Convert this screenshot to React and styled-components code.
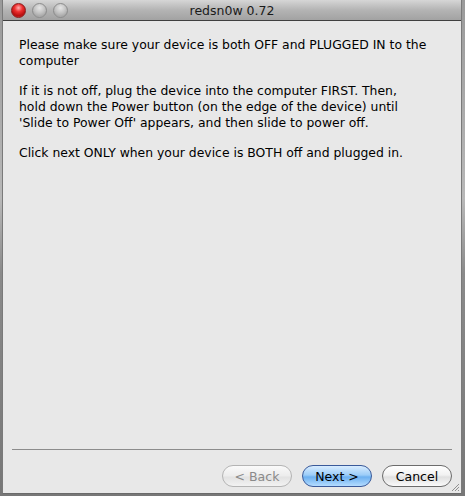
import React from 'react';
import styled, { createGlobalStyle } from 'styled-components';

const Global = createGlobalStyle`
  html, body { margin: 0; padding: 0; }
  body {
    width: 465px;
    height: 496px;
    overflow: hidden;
    background: linear-gradient(#9a9a9a, #b8b8b8 40%, #8a8a8a 55%, #777);
    font-family: "DejaVu Sans", "Liberation Sans", sans-serif;
  }
`;

const Window = styled.div`
  width: 460px;
  height: 494px;
  margin-left: 2px;
  border-left: 1px solid #7a7a7a;
  border-right: 1px solid #7a7a7a;
  border-bottom: 1px solid #6a6a6a;
  box-sizing: border-box;
  display: flex;
  flex-direction: column;
  background: #e8e8e8;
  position: relative;
`;

const TitleBar = styled.div`
  height: 21px;
  flex: none;
  box-sizing: border-box;
  border-bottom: 1px solid #404040;
  background: linear-gradient(#d6d6d6, #b4b4b4 50%, #a2a2a2);
  display: flex;
  align-items: center;
  position: relative;
  padding-left: 8px;
  gap: 5px;
`;

const Light = styled.div`
  width: 15px;
  height: 15px;
  border-radius: 50%;
  box-sizing: border-box;
  border: 1px solid ${p => (p.$red ? '#8a1a1a' : '#8c8c8c')};
  background: ${p =>
    p.$red
      ? 'radial-gradient(circle at 50% 30%, #ffb0b0 0%, #ee3030 35%, #b80f0f 70%, #e54848 100%)'
      : 'radial-gradient(circle at 50% 30%, #e6e6e6 0%, #c4c4c4 45%, #a8a8a8 75%, #c9c9c9 100%)'};
  margin-right: 1px;
`;

const Title = styled.div`
  position: absolute;
  left: 0;
  right: 0;
  text-align: center;
  font-size: 12.5px;
  color: #1a1a1a;
  pointer-events: none;
`;

const Content = styled.div`
  flex: 1;
  padding: 16px 14px 0 16px;
  font-size: 12.4px;
  line-height: 16px;
  color: #000;
`;

const Para = styled.p`
  margin: 0 0 14px 0;
`;

const Footer = styled.div`
  flex: none;
  padding: 0 9px 6px 9px;
`;

const Rule = styled.div`
  height: 1px;
  background: #8c8c8c;
  margin-bottom: 15px;
`;

const Buttons = styled.div`
  display: flex;
  justify-content: flex-end;
  gap: 10px;
`;

const Button = styled.button`
  width: 70px;
  height: 22px;
  border-radius: 11px;
  font-family: "DejaVu Sans", "Liberation Sans", sans-serif;
  font-size: 12.5px;
  padding: 0;
  border: 1px solid ${p => (p.$primary ? '#3a5a9a' : p.$disabled ? '#b4b4b4' : '#6c6c6c')};
  color: ${p => (p.$disabled ? '#8a8a8a' : '#000')};
  background: ${p =>
    p.$primary
      ? 'linear-gradient(#d8ecff, #9ccdf8 45%, #6cb0f0 55%, #b4dcff)'
      : p.$disabled
      ? 'linear-gradient(#fafafa, #ececec 50%, #e2e2e2 55%, #f2f2f2)'
      : 'linear-gradient(#ffffff, #f2f2f2 45%, #e0e0e0 55%, #fafafa)'};
`;

const Grip = styled.svg`
  position: absolute;
  right: 1px;
  bottom: 1px;
`;

export default function App() {
  return (
    <>
      <Global />
      <Window>
        <TitleBar>
          <Light $red />
          <Light />
          <Light />
          <Title>redsn0w 0.72</Title>
        </TitleBar>
        <Content>
          <Para>
            Please make sure your device is both OFF and PLUGGED IN to the
            <br />
            computer
          </Para>
          <Para>
            If it is not off, plug the device into the computer FIRST. Then,
            <br />
            hold down the Power button (on the edge of the device) until
            <br />
            'Slide to Power Off' appears, and then slide to power off.
          </Para>
          <Para>Click next ONLY when your device is BOTH off and plugged in.</Para>
        </Content>
        <Footer>
          <Rule />
          <Buttons>
            <Button $disabled>&lt; Back</Button>
            <Button $primary>Next &gt;</Button>
            <Button>Cancel</Button>
          </Buttons>
        </Footer>
        <Grip width="10" height="10" viewBox="0 0 10 10">
          <path d="M9 2 L2 9 M9 5 L5 9 M9 8 L8 9" stroke="#909090" strokeWidth="1" />
        </Grip>
      </Window>
    </>
  );
}
